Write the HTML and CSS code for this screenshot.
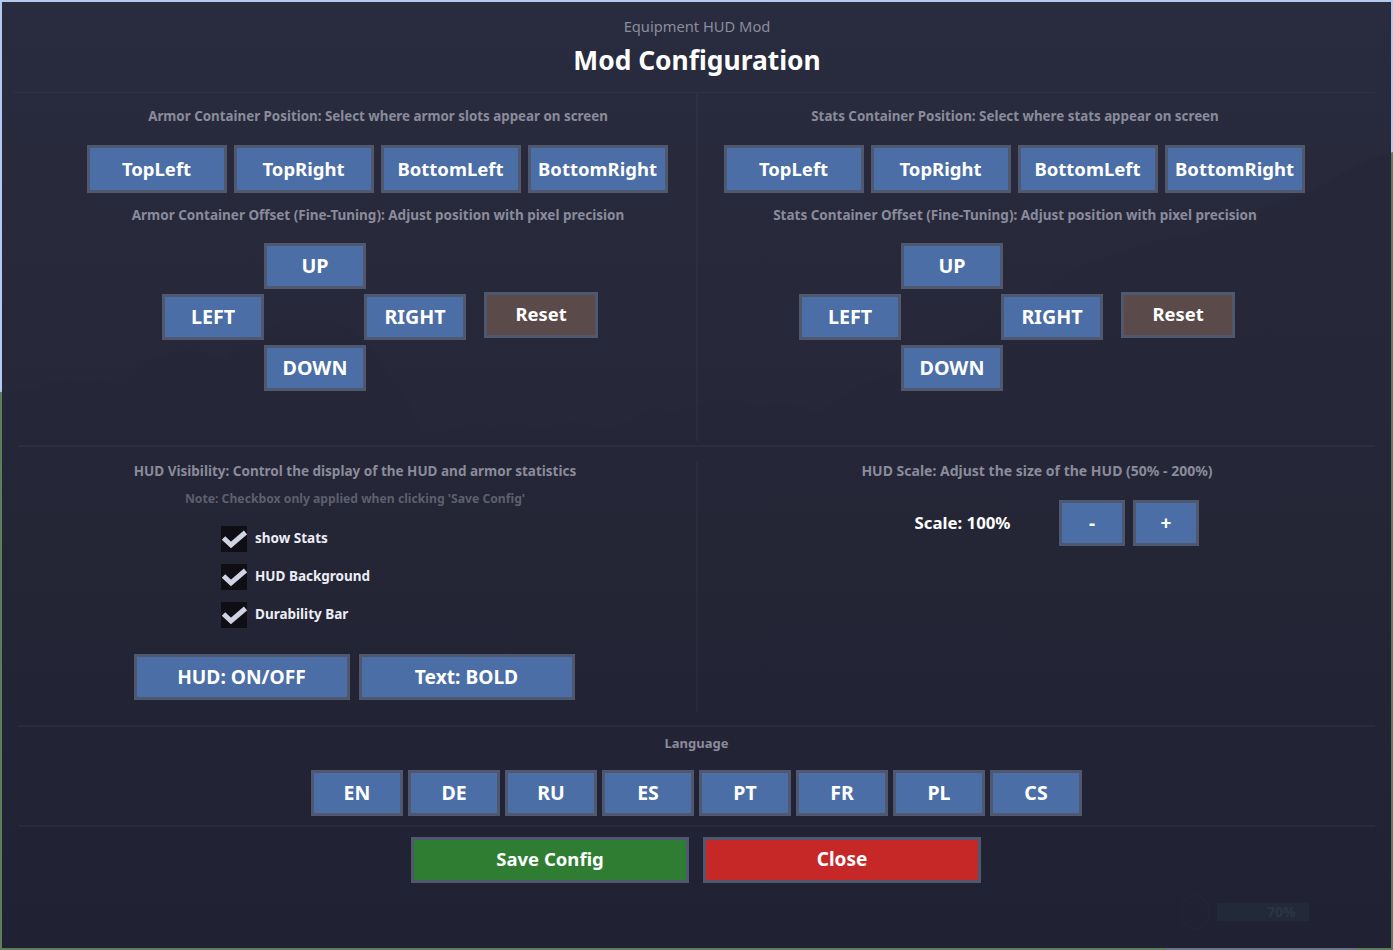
FILE: index.html
```html
<!DOCTYPE html>
<html lang="en">
<head>
<meta charset="utf-8">
<title>Equipment HUD Mod</title>
<link rel="stylesheet" href="styles.css">
</head>
<body>
<svg class="world" viewBox="0 0 1393 950" aria-hidden="true">
  <polygon class="world-ground" points="0,392 900,300 1393,152 1393,950 0,950"/>
  <rect class="world-hotbar" x="1166" y="946" width="190" height="4"/>
</svg>
<main class="panel">
  <svg class="trees" viewBox="0 0 1389 946" aria-hidden="true">
    <path d="M0 400 Q15 385 35 388 Q55 372 80 380 Q105 372 120 388 Q140 358 165 352 Q195 342 225 360 Q235 335 260 330 Q285 312 315 320 Q345 318 360 340 Q378 352 385 375 Q400 385 410 410 Q420 440 445 430 Q465 420 490 425 Q515 418 540 428 Q565 415 590 425 Q620 430 650 405 Q680 415 700 400 Q730 395 760 405 Q790 395 815 412 Q850 385 890 370 Q930 340 975 330 Q1000 300 1040 295 Q1070 262 1110 255 Q1150 235 1190 235 Q1230 225 1260 205 Q1290 195 1310 190 Q1345 165 1389 150 L1389 946 L0 946 Z"/>
  </svg>
  <div class="ghost-hud" aria-hidden="true"><span class="ghost-ring"></span><span class="ghost-bar">70%</span></div>

  <header class="header">
    <p class="subtitle">Equipment HUD Mod</p>
    <h1 class="title">Mod Configuration</h1>
  </header>

  <section class="offsets">
    <div class="offset-col">
      <h2 class="label label-position">Armor Container Position: Select where armor slots appear on screen</h2>
      <div class="corner-row">
        <button class="btn corner">TopLeft</button>
        <button class="btn corner">TopRight</button>
        <button class="btn corner">BottomLeft</button>
        <button class="btn corner">BottomRight</button>
      </div>
      <h2 class="label label-offset">Armor Container Offset (Fine-Tuning): Adjust position with pixel precision</h2>
      <div class="pad-row">
        <div class="dpad">
          <button class="btn dir up">UP</button>
          <button class="btn dir left">LEFT</button>
          <button class="btn dir right">RIGHT</button>
          <button class="btn dir down">DOWN</button>
        </div>
        <button class="btn reset">Reset</button>
      </div>
    </div>
    <div class="offset-col">
      <h2 class="label label-position">Stats Container Position: Select where stats appear on screen</h2>
      <div class="corner-row">
        <button class="btn corner">TopLeft</button>
        <button class="btn corner">TopRight</button>
        <button class="btn corner">BottomLeft</button>
        <button class="btn corner">BottomRight</button>
      </div>
      <h2 class="label label-offset">Stats Container Offset (Fine-Tuning): Adjust position with pixel precision</h2>
      <div class="pad-row">
        <div class="dpad">
          <button class="btn dir up">UP</button>
          <button class="btn dir left">LEFT</button>
          <button class="btn dir right">RIGHT</button>
          <button class="btn dir down">DOWN</button>
        </div>
        <button class="btn reset">Reset</button>
      </div>
    </div>
  </section>

  <section class="options">
    <div class="visibility">
      <h2 class="label">HUD Visibility: Control the display of the HUD and armor statistics</h2>
      <p class="note">Note: Checkbox only applied when clicking 'Save Config'</p>
      <div class="checks">
        <div class="check"><span class="box"><svg viewBox="0 0 26 26"><path d="M2.5 12 L10 19 L24.5 6.5"/></svg></span><span class="check-text">show Stats</span></div>
        <div class="check"><span class="box"><svg viewBox="0 0 26 26"><path d="M2.5 12 L10 19 L24.5 6.5"/></svg></span><span class="check-text">HUD Background</span></div>
        <div class="check"><span class="box"><svg viewBox="0 0 26 26"><path d="M2.5 12 L10 19 L24.5 6.5"/></svg></span><span class="check-text">Durability Bar</span></div>
      </div>
      <div class="toggle-row">
        <button class="btn toggle">HUD: ON/OFF</button>
        <button class="btn toggle">Text: BOLD</button>
      </div>
    </div>
    <div class="scale">
      <h2 class="label label-scale">HUD Scale: Adjust the size of the HUD (50% - 200%)</h2>
      <div class="scale-row">
        <span class="scale-value">Scale: 100%</span>
        <button class="btn step">-</button>
        <button class="btn step">+</button>
      </div>
    </div>
  </section>

  <section class="language">
    <h2 class="label label-language">Language</h2>
    <div class="lang-row">
      <button class="btn lang">EN</button>
      <button class="btn lang">DE</button>
      <button class="btn lang">RU</button>
      <button class="btn lang">ES</button>
      <button class="btn lang">PT</button>
      <button class="btn lang">FR</button>
      <button class="btn lang">PL</button>
      <button class="btn lang">CS</button>
    </div>
  </section>

  <footer class="footer">
    <button class="btn action save">Save Config</button>
    <button class="btn action close">Close</button>
  </footer>
</main>
</body>
</html>
```
FILE: styles.css
```css
* { box-sizing: border-box; }
html, body { margin: 0; height: 950px; overflow: hidden; }
body {
  position: relative;
  padding: 2px;
  background: #b4c9ee;
  font-family: "Noto Sans", "Open Sans", sans-serif;
}
.world { position: absolute; left: 0; top: 0; width: 1393px; height: 950px; }
.world-ground { fill: #5f7d5c; }
.world-hotbar { fill: #6a7488; }

.panel {
  position: relative;
  display: flex;
  flex-direction: column;
  width: 1389px;
  height: 946px;
  padding: 0 16px 0 16px;
  overflow: hidden;
  background: linear-gradient(180deg, #292b3e 0%, #262839 45%, #212335 100%);
}
.trees { position: absolute; left: 0; top: 0; width: 1389px; height: 946px; }
.trees path { fill: rgba(10, 12, 25, 0.05); }
.ghost-hud {
  position: absolute;
  left: 1178px;
  top: 892px;
  display: flex;
  align-items: center;
  gap: 7px;
}
.ghost-ring {
  width: 30px;
  height: 36px;
  border-radius: 50%;
  border: 2px solid rgba(70, 40, 50, 0.14);
}
.ghost-bar {
  width: 92px;
  height: 18px;
  padding-left: 50px;
  background: #222a3a;
  color: #2d3545;
  font-size: 14px;
  font-weight: 700;
  line-height: 18px;
}

.header, .offsets, .options, .language, .footer { position: relative; flex: none; }

.header {
  height: 91px;
  margin-left: -5px;
  padding: 14px 0 0 6px;
  border-bottom: 1px solid rgba(255, 255, 255, 0.04);
  text-align: center;
}
.subtitle {
  margin: 0;
  color: #8b8d9c;
  font-size: 14.7px;
  line-height: 20px;
}
.title {
  margin: 6px 0 0;
  color: #fff;
  font-size: 26.4px;
  font-weight: 700;
  line-height: 36px;
}

.label {
  margin: 0;
  color: #8a8b9b;
  font-size: 13.5px;
  font-weight: 700;
  line-height: 18px;
  text-align: center;
  white-space: nowrap;
}
.label-position { padding-left: 2px; font-size: 13.35px; }
.label-offset { margin-top: 13px; padding-left: 2px; }
.label-scale { font-size: 14px; }
.label-language { font-size: 13px; }

.btn {
  display: block;
  padding: 0;
  border: 3px solid #50586f;
  border-radius: 0;
  background: #4a6ea5;
  color: #fff;
  font: 700 19px/1 "Noto Sans", "Open Sans", sans-serif;
  white-space: nowrap;
}

.offsets {
  display: grid;
  grid-template-columns: 642px 632px;
  height: 354px;
  padding: 14px 0 0 38px;
  border-bottom: 2px solid rgba(255, 255, 255, 0.035);
}
.offsets::after {
  content: "";
  position: absolute;
  left: 678px;
  top: 0;
  bottom: 4px;
  width: 2px;
  background: rgba(255, 255, 255, 0.03);
}
.offset-col { display: flex; flex-direction: column; align-items: center; }
.corner-row { display: flex; gap: 7px; margin-top: 20px; }
.corner { width: 140px; height: 48px; font-size: 18.5px; }

.pad-row {
  display: flex;
  align-items: flex-start;
  gap: 18px;
  width: 436px;
  margin: 19px 0 0 6px;
}
.dpad {
  display: grid;
  grid-template-columns: 102px 100px 102px;
  grid-template-rows: repeat(3, 46px);
  row-gap: 5px;
}
.dir { width: 102px; height: 46px; font-size: 19.7px; }
.up { grid-column: 2; grid-row: 1; }
.left { grid-column: 1; grid-row: 2; }
.right { grid-column: 3; grid-row: 2; }
.down { grid-column: 2; grid-row: 3; }
.reset {
  width: 114px;
  height: 46px;
  margin-top: 49px;
  padding-bottom: 2px;
  background: #5a4a4a;
  font-size: 18.4px;
}

.options {
  display: grid;
  grid-template-columns: 674px 682px;
  column-gap: 4px;
  height: 280px;
  padding-top: 15px;
  border-bottom: 2px solid rgba(255, 255, 255, 0.035);
}
.options::after {
  content: "";
  position: absolute;
  left: 678px;
  top: 15px;
  bottom: 13px;
  width: 2px;
  background: rgba(255, 255, 255, 0.03);
}
.visibility, .scale { display: flex; flex-direction: column; align-items: center; }
.note {
  margin: 10px 0 0;
  color: #5e5f6d;
  font-size: 12.2px;
  font-weight: 700;
  line-height: 18px;
}
.checks {
  display: flex;
  flex-direction: column;
  gap: 12px;
  align-self: flex-start;
  margin: 18px 0 0 203px;
}
.check { display: flex; align-items: center; gap: 8px; }
.box { display: block; width: 26px; height: 26px; background: #0e0e14; }
.box svg { display: block; width: 26px; height: 26px; }
.box path { fill: none; stroke: #d0d3e4; stroke-width: 5; }
.check-text { padding-bottom: 2px; color: #eceef5; font-size: 13.5px; font-weight: 700; }
.toggle-row { display: flex; gap: 9px; margin: 26px 2px 0 0; }
.toggle { width: 216px; height: 46px; font-size: 19.2px; }

.scale-row { display: flex; align-items: center; gap: 8px; margin-top: 20px; }
.scale-value {
  width: 175px;
  margin-right: 1px;
  padding-bottom: 2px;
  color: #fff;
  font-size: 16.8px;
  font-weight: 700;
  text-align: center;
}
.step { width: 66px; height: 46px; font-size: 19px; }

.language {
  display: flex;
  flex-direction: column;
  align-items: center;
  height: 100px;
  padding-top: 7px;
  border-bottom: 2px solid rgba(255, 255, 255, 0.035);
}
.lang-row { display: flex; gap: 5px; margin-top: 18px; }
.lang { width: 92px; height: 46px; padding-bottom: 1px; font-size: 19.5px; }

.footer { display: flex; justify-content: center; gap: 14px; padding: 10px 1px 0 0; }
.action { width: 278px; height: 46px; padding-bottom: 1px; }
.save { background: #2e7d32; font-size: 18.5px; }
.close { background: #c62828; }
```
